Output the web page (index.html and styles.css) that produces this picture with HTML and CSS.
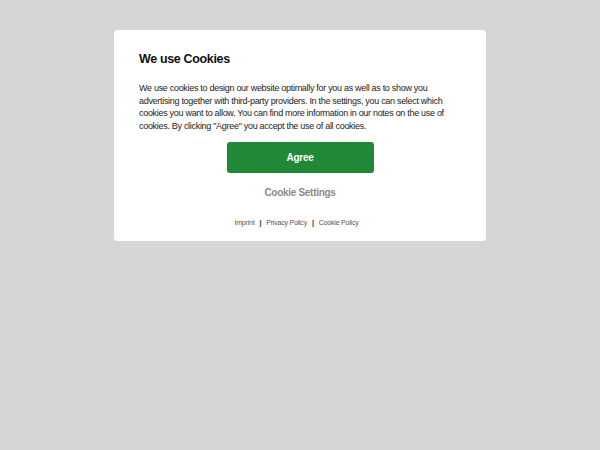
FILE: index.html
```html
<!DOCTYPE html>
<html lang="en">
<head>
    <meta charset="UTF-8">
    <meta name="viewport" content="width=device-width, initial-scale=1.0">
    <title>Cookies</title>
    <link rel="stylesheet" href="styles.css">
</head>
<body>
    <div class="consent">
        <h2 class="consent-title">We use Cookies</h2>
        <p class="consent-text">We use cookies to design our website optimally for you as well as to show you advertising together with third-party providers. In the settings, you can select which cookies you want to allow. You can find more information in our notes on the use of cookies. By clicking "Agree" you accept the use of all cookies.</p>
        <div class="consent-actions">
            <a class="btn-agree" href="#">Agree</a>
            <a class="btn-settings" href="#">Cookie Settings</a>
        </div>
        <div class="consent-links">
            <a href="#">Imprint</a>
            <span class="sep">|</span>
            <a href="#">Privacy Policy</a>
            <span class="sep">|</span>
            <a href="#">Cookie Policy</a>
        </div>
    </div>
</body>
</html>
```

FILE: styles.css
```css
*{
    padding: 0;
    margin: 0;
    box-sizing: border-box;
}
body{
    background-color: #d6d6d6;
    font-family: "Liberation Sans", Arial, sans-serif;
    padding-top: 30px;
}
a{
    text-decoration: none;
}
.consent{
    width: 372px;
    margin: 0 auto;
    background-color: #fff;
    border-radius: 4px;
    padding: 20px 25px 13px;
}
.consent-title{
    font-size: 12.5px;
    letter-spacing: -0.35px;
    font-weight: bold;
    color: #111;
    line-height: 18px;
}
.consent-text{
    margin-top: 14px;
    font-size: 9px;
    letter-spacing: -0.3px;
    line-height: 12.5px;
    color: #222;
}
.consent-actions{
    display: flex;
    flex-direction: column;
    align-items: center;
    margin-top: 10px;
}
.btn-agree{
    display: block;
    width: 147px;
    height: 31px;
    line-height: 31px;
    text-align: center;
    background-color: #218838;
    color: #fff;
    font-size: 10px;
    letter-spacing: -0.3px;
    font-weight: bold;
    border-radius: 3px;
}
.btn-settings{
    margin-top: 13px;
    font-size: 10px;
    letter-spacing: -0.3px;
    font-weight: bold;
    color: #8a8a8a;
    line-height: 14px;
}
.consent-links{
    display: flex;
    justify-content: center;
    gap: 5px;
    margin-top: 18px;
    padding-right: 7px;
    font-size: 7px;
    letter-spacing: -0.2px;
    line-height: 10px;
}
.consent-links a{
    color: #555;
}
.consent-links .sep{
    color: #222;
    font-weight: bold;
}
```
